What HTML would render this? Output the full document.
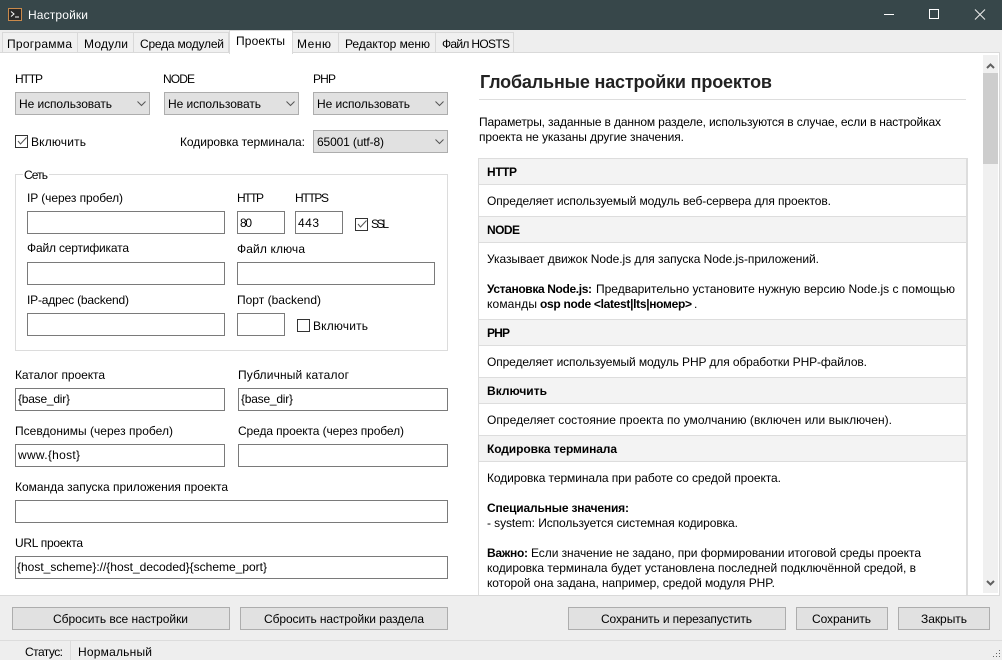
<!DOCTYPE html>
<html><head><meta charset="utf-8">
<style>
html,body{margin:0;padding:0;width:1002px;height:660px;overflow:hidden;background:#eee}
#r{position:absolute;left:0;top:0;width:1002px;height:660px;overflow:hidden}
#r div{position:absolute;box-sizing:border-box}
.sel{background:#e1e1e1;border:1px solid #adadad;height:23px}
.inp{background:#fff;border:1px solid #7a7a7a;height:23px}
.btn{background:#e1e1e1;border:1px solid #adadad;height:23px;top:607px}
.cb{background:#fff;border:1px solid #333;width:13px;height:13px}
.tab{top:32px;height:20px;background:#f0f0f0;border:1px solid #d9d9d9;border-bottom:0}
.hd{left:479px;width:487px;background:#f3f3f3}
.ln{left:479px;width:487px;height:1px;background:#ddd}
svg{position:absolute;left:0;top:0}
text{font-family:"Liberation Sans",sans-serif;font-size:12px;fill:#000}
.b{font-weight:bold}
</style></head><body><div id="r">
<div style="left:0;top:0;width:1002px;height:30px;background:#37474a"></div>
<div style="left:8px;top:8px;width:14px;height:13px;background:#2a2a2a;border:1px solid #c98a4b"></div>
<div style="left:0;top:52px;width:1000px;height:1px;background:#d9d9d9"></div>
<div class="tab" style="left:2px;width:76px"></div>
<div class="tab" style="left:77px;width:57px"></div>
<div class="tab" style="left:133px;width:96px"></div>
<div class="tab" style="left:292px;width:47px"></div>
<div class="tab" style="left:338px;width:98px"></div>
<div class="tab" style="left:435px;width:79px"></div>
<div style="left:229px;top:30px;width:64px;height:24px;background:#fff;border:1px solid #d9d9d9;border-bottom:0"></div>
<div style="left:0;top:53px;width:1000px;height:543px;background:#fff;border-right:1px solid #d9d9d9;border-bottom:1px solid #d9d9d9"></div>
<div style="left:229px;top:52px;width:64px;height:2px;background:#fff;border-left:1px solid #d9d9d9;border-right:1px solid #d9d9d9"></div>

<div class="sel" style="left:15px;top:92px;width:135px"></div>
<div class="sel" style="left:164px;top:92px;width:135px"></div>
<div class="sel" style="left:313px;top:92px;width:135px"></div>
<div class="sel" style="left:313px;top:130px;width:135px"></div>
<div class="cb" style="left:15px;top:135px"></div>
<div style="left:15px;top:174px;width:433px;height:177px;border:1px solid #dcdcdc"></div>
<div style="left:23px;top:172px;width:26px;height:5px;background:#fff"></div>
<div class="inp" style="left:27px;top:211px;width:198px"></div>
<div class="inp" style="left:237px;top:211px;width:48px"></div>
<div class="inp" style="left:295px;top:211px;width:48px"></div>
<div class="cb" style="left:355px;top:218px"></div>
<div class="inp" style="left:27px;top:262px;width:198px"></div>
<div class="inp" style="left:237px;top:262px;width:198px"></div>
<div class="inp" style="left:27px;top:313px;width:198px"></div>
<div class="inp" style="left:237px;top:313px;width:48px"></div>
<div class="cb" style="left:297px;top:319px"></div>
<div class="inp" style="left:15px;top:388px;width:210px"></div>
<div class="inp" style="left:238px;top:388px;width:210px"></div>
<div class="inp" style="left:15px;top:444px;width:210px"></div>
<div class="inp" style="left:238px;top:444px;width:210px"></div>
<div class="inp" style="left:15px;top:500px;width:433px"></div>
<div class="inp" style="left:15px;top:556px;width:433px"></div>

<div style="left:479px;top:99px;width:487px;height:1px;background:#ddd"></div>
<div style="left:478px;top:158px;width:490px;height:437px;border:1px solid #ddd;border-bottom:0;border-width:1px 2px 0 1px"></div>
<div class="hd" style="top:159px;height:25px"></div>
<div class="hd" style="top:217px;height:25px"></div>
<div class="hd" style="top:320px;height:25px"></div>
<div class="hd" style="top:378px;height:25px"></div>
<div class="hd" style="top:436px;height:25px"></div>
<div class="ln" style="top:184px"></div><div class="ln" style="top:216px"></div>
<div class="ln" style="top:242px"></div><div class="ln" style="top:319px"></div>
<div class="ln" style="top:345px"></div><div class="ln" style="top:377px"></div>
<div class="ln" style="top:403px"></div><div class="ln" style="top:435px"></div>
<div class="ln" style="top:461px"></div>

<div style="left:983px;top:55px;width:15px;height:538px;background:#f0f0f0"></div>
<div style="left:983px;top:73px;width:15px;height:91px;background:#cdcdcd"></div>

<div class="btn" style="left:12px;width:218px"></div>
<div class="btn" style="left:240px;width:208px"></div>
<div class="btn" style="left:568px;width:218px"></div>
<div class="btn" style="left:796px;width:92px"></div>
<div class="btn" style="left:898px;width:92px"></div>
<div style="left:0;top:640px;width:1002px;height:1px;background:#dcdcdc"></div>
<div style="left:70px;top:641px;width:1px;height:19px;background:#dcdcdc"></div>

<svg width="1002" height="660" viewBox="0 0 1002 660">
<g fill="none" stroke="#fff">
<path d="M11 11.500l3 2.500-3 2.500M15 17h4" stroke-width="1"/>
<path d="M884 14.500h10" stroke-width="1"/>
<rect x="929.500" y="9.500" width="9" height="9" stroke-width="1"/>
<path d="M975 9.500l10 10M985 9.500l-10 10" stroke-width="1.100" stroke="#e8e8e8"/>
</g>
<g fill="none" stroke="#555" stroke-width="1">
<path d="M137.500 101.500l4 4 4-4M286.500 101.500l4 4 4-4M435.500 101.500l4 4 4-4M435.500 139.500l4 4 4-4"/>
<path d="M18 141l2.500 3 6-6.500M358 224l2.500 3 6-6.500"/>
</g>
<path d="M987 68l3.500-3.500 3.500 3.500" fill="none" stroke="#606060" stroke-width="2"/>
<path d="M987 581l3.500 3.500 3.500-3.500" fill="none" stroke="#606060" stroke-width="2"/>
<g fill="#646464"><rect x="993" y="656" width="1" height="1"/><rect x="996" y="656" width="1" height="1"/><rect x="999" y="656" width="1" height="1"/><rect x="996" y="653" width="1" height="1"/><rect x="999" y="653" width="1" height="1"/><rect x="999" y="650" width="1" height="1"/></g>

<text x="28" y="19" textLength="60" style="fill:#fff">Настройки</text>
<text x="7" y="48" textLength="65">Программа</text>
<text x="84" y="48" textLength="44">Модули</text>
<text x="140" y="48" textLength="84">Среда модулей</text>
<text x="236" y="45" textLength="49">Проекты</text>
<text x="297" y="48" textLength="34">Меню</text>
<text x="345" y="48" textLength="85">Редактор меню</text>
<text x="442" y="48" textLength="68">Файл HOSTS</text>

<text x="15" y="83" textLength="28">HTTP</text>
<text x="163" y="83" textLength="32">NODE</text>
<text x="313" y="83" textLength="23">PHP</text>
<text x="19" y="108" textLength="93">Не использовать</text>
<text x="168" y="108" textLength="93">Не использовать</text>
<text x="317" y="108" textLength="93">Не использовать</text>
<text x="31" y="146" textLength="55">Включить</text>
<text x="180" y="146" textLength="125">Кодировка терминала:</text>
<text x="317" y="146" textLength="67">65001 (utf-8)</text>
<text x="24" y="179" textLength="24">Сеть</text>
<text x="27" y="202" textLength="96">IP (через пробел)</text>
<text x="237" y="202" textLength="27">HTTP</text>
<text x="295" y="202" textLength="34">HTTPS</text>
<text x="240" y="227" textLength="12">80</text>
<text x="298" y="227" textLength="21">443</text>
<text x="371" y="228" textLength="18">SSL</text>
<text x="27" y="252" textLength="102">Файл сертификата</text>
<text x="237" y="253" textLength="68">Файл ключа</text>
<text x="27" y="304" textLength="102">IP-адрес (backend)</text>
<text x="237" y="304" textLength="84">Порт (backend)</text>
<text x="313" y="330" textLength="55">Включить</text>
<text x="15" y="379" textLength="90">Каталог проекта</text>
<text x="238" y="379" textLength="111">Публичный каталог</text>
<text x="18" y="403" textLength="52">{base_dir}</text>
<text x="241" y="403" textLength="52">{base_dir}</text>
<text x="15" y="435" textLength="158">Псевдонимы (через пробел)</text>
<text x="238" y="435" textLength="166">Среда проекта (через пробел)</text>
<text x="18" y="459" textLength="62">www.{host}</text>
<text x="15" y="491" textLength="213">Команда запуска приложения проекта</text>
<text x="15" y="547" textLength="68">URL проекта</text>
<text x="17" y="571" textLength="250">{host_scheme}://{host_decoded}{scheme_port}</text>

<text x="53" y="623" textLength="135">Сбросить все настройки</text>
<text x="264" y="623" textLength="160">Сбросить настройки раздела</text>
<text x="601" y="623" textLength="151">Сохранить и перезапустить</text>
<text x="812" y="623" textLength="59">Сохранить</text>
<text x="921" y="623" textLength="46">Закрыть</text>
<text x="25" y="656" textLength="38">Статус:</text>
<text x="78" y="656" textLength="74">Нормальный</text>

<text class="b" x="480" y="88" textLength="292" style="font-size:18px;fill:#222">Глобальные настройки проектов</text>
<text x="479" y="126" textLength="462">Параметры, заданные в данном разделе, используются в случае, если в настройках</text>
<text x="479" y="141" textLength="205">проекта не указаны другие значения.</text>
<text class="b" x="487" y="176" textLength="30">HTTP</text>
<text x="487" y="205" textLength="344">Определяет используемый модуль веб-сервера для проектов.</text>
<text class="b" x="487" y="234" textLength="33">NODE</text>
<text x="487" y="263" textLength="332">Указывает движок Node.js для запуска Node.js-приложений.</text>
<text class="b" x="487" y="293" textLength="105">Установка Node.js:</text>
<text x="596" y="293" textLength="359">Предварительно установите нужную версию Node.js с помощью</text>
<text x="487" y="308" textLength="50">команды</text>
<text class="b" x="540" y="308" textLength="152">osp node &lt;latest|lts|номер&gt;</text>
<text x="694" y="308">.</text>
<text class="b" x="487" y="337" textLength="23">PHP</text>
<text x="487" y="366" textLength="380">Определяет используемый модуль PHP для обработки PHP-файлов.</text>
<text class="b" x="487" y="395" textLength="60">Включить</text>
<text x="487" y="424" textLength="405">Определяет состояние проекта по умолчанию (включен или выключен).</text>
<text class="b" x="487" y="453" textLength="130">Кодировка терминала</text>
<text x="487" y="482" textLength="294">Кодировка терминала при работе со средой проекта.</text>
<text class="b" x="487" y="512" textLength="142">Специальные значения:</text>
<text x="487" y="527" textLength="251">- system: Используется системная кодировка.</text>
<text class="b" x="487" y="557" textLength="41">Важно:</text>
<text x="531" y="557" textLength="390">Если значение не задано, при формировании итоговой среды проекта</text>
<text x="487" y="572" textLength="429">кодировка терминала будет установлена последней подключённой средой, в</text>
<text x="487" y="587" textLength="288">которой она задана, например, средой модуля PHP.</text>
</svg>
</div></body></html>
